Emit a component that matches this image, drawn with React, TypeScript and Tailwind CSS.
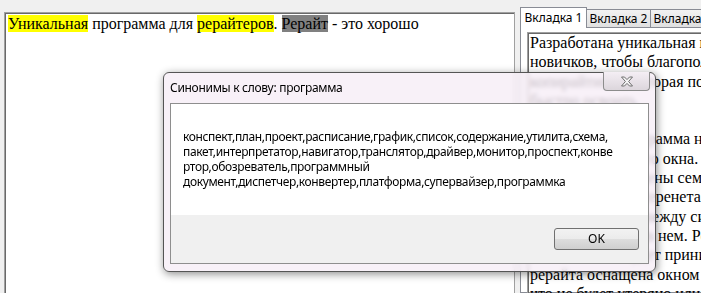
const serif = "font-['Liberation_Serif','Times_New_Roman',serif]";
const ui = "font-['Noto_Sans','Open_Sans',sans-serif]";

const rightLines = [
  'Разработана уникальная программа для',
  'новичков, чтобы благополучно начать',
  'копирайтинга, которая поможет',
  'быстро освоить',
  '',
  'Эта простая программа не требует',
  'работает из одного окна.',
  'В редактор встроены семь функций',
  'функций для Интеренета',
  'Можно перейти между синонимами',
  'и легко работать в нем. Рерайт',
  'Главное поле будет принимать',
  'рерайта оснащена окном',
  'что не будет утеряно или',
];

const synonyms = [
  'конспект,план,проект,расписание,график,список,содержание,утилита,схема,',
  'пакет,интерпретатор,навигатор,транслятор,драйвер,монитор,проспект,конве',
  'ртор,обозреватель,программный',
  'документ,диспетчер,конвертер,платформа,супервайзер,программка',
];

function CloseGlyph() {
  return (
    <svg width="14" height="11" viewBox="0 0 14 11">
      <path
        d="M1.5 1 L4.5 1 L7 3.6 L9.5 1 L12.5 1 L8.6 5.5 L12.5 10 L9.5 10 L7 7.4 L4.5 10 L1.5 10 L5.4 5.5 Z"
        fill="#f4f4f4"
        stroke="#6f6f6f"
        strokeWidth="1"
        strokeLinejoin="round"
      />
    </svg>
  );
}

function SynonymDialog() {
  return (
    <div className="absolute left-[163px] top-[72px] w-[493px] h-[200px] rounded-[6px] border border-[#555] bg-[#f6eef6]/80 backdrop-blur-[2px] shadow-[1px_2px_9px_rgba(0,0,0,0.45)]">
      {/* title bar */}
      <div className={`h-[30px] pl-[6px] flex items-center text-[12px] tracking-[-0.3px] text-black ${ui}`}>
        Синонимы к слову: программа
      </div>
      <button
        type="button"
        className="absolute top-[-1px] right-[5px] w-[47px] h-[19px] flex items-center justify-center rounded-b-[4px] border border-[#8c8c8c] border-t-0 bg-gradient-to-b from-[#f4eef4] to-[#dcd6dc]"
      >
        <CloseGlyph />
      </button>

      {/* client area */}
      <div className="mx-[6px] h-[161px] border border-[#8e8e8e] flex flex-col">
        <div className={`h-[111px] bg-white pl-[12px] pt-[25px] text-[12px] leading-[15px] tracking-[-0.36px] text-black ${ui}`}>
          {synonyms.map((line, i) => (
            <div key={i} className="whitespace-nowrap">{line}</div>
          ))}
        </div>
        <div className="flex-1 bg-[#f0f0f0] flex justify-end items-start pt-[13px] pr-[9px]">
          <button
            type="button"
            className={`w-[85px] h-[22px] rounded-[3px] border border-[#707070] bg-[linear-gradient(#f2f2f2_0%,#ebebeb_50%,#dddddd_51%,#cfcfcf_100%)] text-[12px] text-black ${ui}`}
          >
            OK
          </button>
        </div>
      </div>
    </div>
  );
}

export default function App() {
  return (
    <div className="relative w-[701px] h-[293px] overflow-hidden bg-[#f0f0f0] flex items-start">
      {/* main text field */}
      <div className={`mt-[12px] ml-[4px] w-[511px] h-[300px] shrink-0 bg-white border border-[#a0a0a0] shadow-[inset_1px_1px_0_#696969] pl-[3px] pt-[2px] text-[16px] leading-[18px] text-black ${serif}`}>
        <span className="bg-[#ffff00]">Уникальная</span> программа для{' '}
        <span className="bg-[#ffff00]">рерайтеров</span>.{' '}
        <span className="bg-[#808080]">Рерайт</span> - это хорошо
      </div>

      {/* tabs */}
      <div className="ml-[5px] mt-[7px] w-[240px] shrink-0 flex flex-col">
        <div className={`h-[20px] flex items-start text-[12px] text-black ${ui}`}>
          <div className="relative z-10 w-[67px] h-[21px] bg-white border border-b-0 border-[#898c95] flex items-center justify-center pb-[1px]">
            Вкладка 1
          </div>
          <div className="mt-[2px] w-[64px] h-[18px] border border-l-0 border-b-0 border-[#898c95] bg-gradient-to-b from-[#f2f2f2] to-[#e0e0e0] flex items-center justify-center">
            Вкладка 2
          </div>
          <div className="mt-[2px] w-[64px] h-[18px] border border-l-0 border-b-0 border-[#898c95] bg-gradient-to-b from-[#f2f2f2] to-[#e0e0e0] flex items-center justify-center">
            Вкладка 3
          </div>
        </div>
        <div className="h-[266px] bg-white border border-[#898c95] pt-[4px] pl-[6px]">
          <div className={`h-[270px] border border-[#a0a0a0] shadow-[inset_1px_1px_0_#696969] pl-[2px] text-[16px] leading-[19.3px] text-black ${serif}`}>
            {rightLines.map((line, i) => (
              <div key={i} className="h-[19.3px] whitespace-nowrap">{line}</div>
            ))}
          </div>
        </div>
      </div>

      <SynonymDialog />
    </div>
  );
}
